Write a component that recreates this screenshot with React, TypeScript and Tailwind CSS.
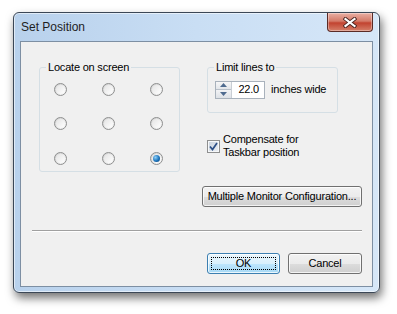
import React from "react";
import clsx from "clsx";

const ui = "font-['Liberation_Sans',Arial,sans-serif] text-[11px] leading-[13px] tracking-[-0.2px] text-black";

const Radio = ({ checked }: { checked?: boolean }) => (
  <span className="flex h-[13px] w-[13px] items-center justify-center rounded-full border border-[#8e8f8f] bg-gradient-to-br from-[#cfcfcf] to-[#fafafa]">
    <span className="flex h-[9px] w-[9px] items-center justify-center rounded-full bg-gradient-to-br from-[#e4e4e4] to-white">
      {checked && (
        <span className="h-[7px] w-[7px] rounded-full bg-[radial-gradient(circle_at_35%_35%,#8fd0f8,#1c74bc_55%,#0a3a6a)]" />
      )}
    </span>
  </span>
);

const Button = ({ children, primary, className }: { children: React.ReactNode; primary?: boolean; className?: string }) => (
  <button
    className={clsx(
      "relative flex h-[21px] items-center justify-center rounded-[3px] border shadow-[inset_0_0_0_1px_rgba(255,255,255,0.75)]",
      primary
        ? "border-[#3c7fb1] bg-[linear-gradient(#eaf6fd_0%,#d9f0fc_50%,#bee6fd_51%,#a7d9f5_100%)]"
        : "border-[#707070] bg-[linear-gradient(#f2f2f2_0%,#ebebeb_50%,#dddddd_51%,#cfcfcf_100%)]",
      className
    )}
  >
    {primary && <span className="absolute inset-[3px] border border-dotted border-black" />}
    {children}
  </button>
);

const Legend = ({ children }: { children: React.ReactNode }) => (
  <legend className="ml-[6px] px-[2px] leading-[13px]">{children}</legend>
);

export default function App() {
  return (
    <div className={clsx("h-[314px] w-[397px] bg-white pl-[13px] pt-[12px]", ui)}>
      {/* window */}
      <div className="flex h-[281px] w-[367px] flex-col rounded-[6px] border border-[#3b4756] bg-gradient-to-r from-[#b8d1ec] via-[#c9def4] to-[#d6e7f8] shadow-[2px_5px_10px_rgba(0,0,0,0.55),inset_0_0_0_1px_rgba(255,255,255,0.55)]">
        {/* title bar */}
        <div className="flex h-[28px] items-start justify-between">
          <span className="ml-[7px] mt-[6px] font-['Liberation_Sans',Arial,sans-serif] text-[12px] leading-[16px] tracking-normal text-[#1e1e1e]">
            Set Position
          </span>
          <div className="mr-[6px] flex h-[19px] w-[46px] items-center justify-center rounded-b-[4px] border border-t-0 border-[#5a2b26] bg-[linear-gradient(#eab0a4_0%,#d47a68_45%,#c24330_55%,#d5806a_100%)] shadow-[inset_0_0_0_1px_rgba(255,255,255,0.35)]">
            <svg width="14" height="11" viewBox="0 0 14 11">
              <path d="M2.5 2 L11.5 9 M11.5 2 L2.5 9" stroke="#4a2420" strokeWidth="4" strokeLinecap="square" />
              <path d="M2.5 2 L11.5 9 M11.5 2 L2.5 9" stroke="#ffffff" strokeWidth="2.2" strokeLinecap="square" />
            </svg>
          </div>
        </div>

        {/* client area */}
        <div className="ml-[6px] flex h-[246px] w-[353px] flex-col border border-[#7d8fa3] bg-[#f0f0f0] pt-[19px]">
          <div className="flex">
            <fieldset className="ml-[18px] h-[111px] w-[141px] rounded-[3px] border border-[#d5dfe5]">
              <Legend>Locate on screen</Legend>
              <div className="grid grid-cols-[13px_13px_13px] gap-x-[35px] gap-y-[21.5px] pl-[14px] pt-[8.5px]">
                <Radio />
                <Radio />
                <Radio />
                <Radio />
                <Radio />
                <Radio />
                <Radio />
                <Radio />
                <Radio checked />
              </div>
            </fieldset>

            <div className="ml-[22px] flex flex-col">
              <fieldset className="ml-[5px] h-[52px] w-[131px] rounded-[3px] border border-[#d5dfe5]">
                <Legend>Limit lines to</Legend>
                <div className="mt-[6.5px] flex items-center pl-[7px]">
                  <div className="flex h-[18px] w-[50px] border border-[#a9b2bc] bg-white">
                    <div className="flex w-[16px] flex-col border-r border-[#c9ced4]">
                      <span className="flex flex-1 items-center justify-center border-b border-[#b8c0c9] bg-gradient-to-b from-[#f7f7f7] to-[#e3e6ea]">
                        <svg width="7" height="4" viewBox="0 0 7 4"><path d="M0 4 L3.5 0 L7 4 Z" fill="#4f6b8f" /></svg>
                      </span>
                      <span className="flex flex-1 items-center justify-center bg-gradient-to-b from-[#f2f3f5] to-[#dde1e6]">
                        <svg width="7" height="4" viewBox="0 0 7 4"><path d="M0 0 L7 0 L3.5 4 Z" fill="#4f6b8f" /></svg>
                      </span>
                    </div>
                    <span className="flex flex-1 items-center justify-end pr-[5px]">22.0</span>
                  </div>
                  <span className="ml-[6px]">inches wide</span>
                </div>
              </fieldset>

              <label className="ml-[5px] mt-[20px] flex items-center gap-[3px]">
                <span className="flex h-[13px] w-[13px] items-center justify-center border border-[#8e8f8f] bg-gradient-to-br from-[#c6d0dc] to-[#eef1f5] shadow-[inset_0_0_0_1px_#f6f8fa]">
                  <svg width="9" height="9" viewBox="0 0 9 9">
                    <path d="M1 4.5 L3.5 7.5 L8 1" stroke="#2c4f86" strokeWidth="1.7" fill="none" />
                  </svg>
                </span>
                <span>
                  Compensate for
                  <br />
                  Taskbar position
                </span>
              </label>

              <Button className="mt-[27px] w-[160px]">Multiple Monitor Configuration...</Button>
            </div>
          </div>

          <div className="ml-[11px] mr-[10px] mt-[23px] border-t border-b border-t-[#a0a0a0] border-b-white" />

          <div className="mt-[21px] flex justify-end gap-[8px] pr-[10px]">
            <Button primary className="w-[73px]">OK</Button>
            <Button className="w-[74px]">Cancel</Button>
          </div>
        </div>
      </div>
    </div>
  );
}
